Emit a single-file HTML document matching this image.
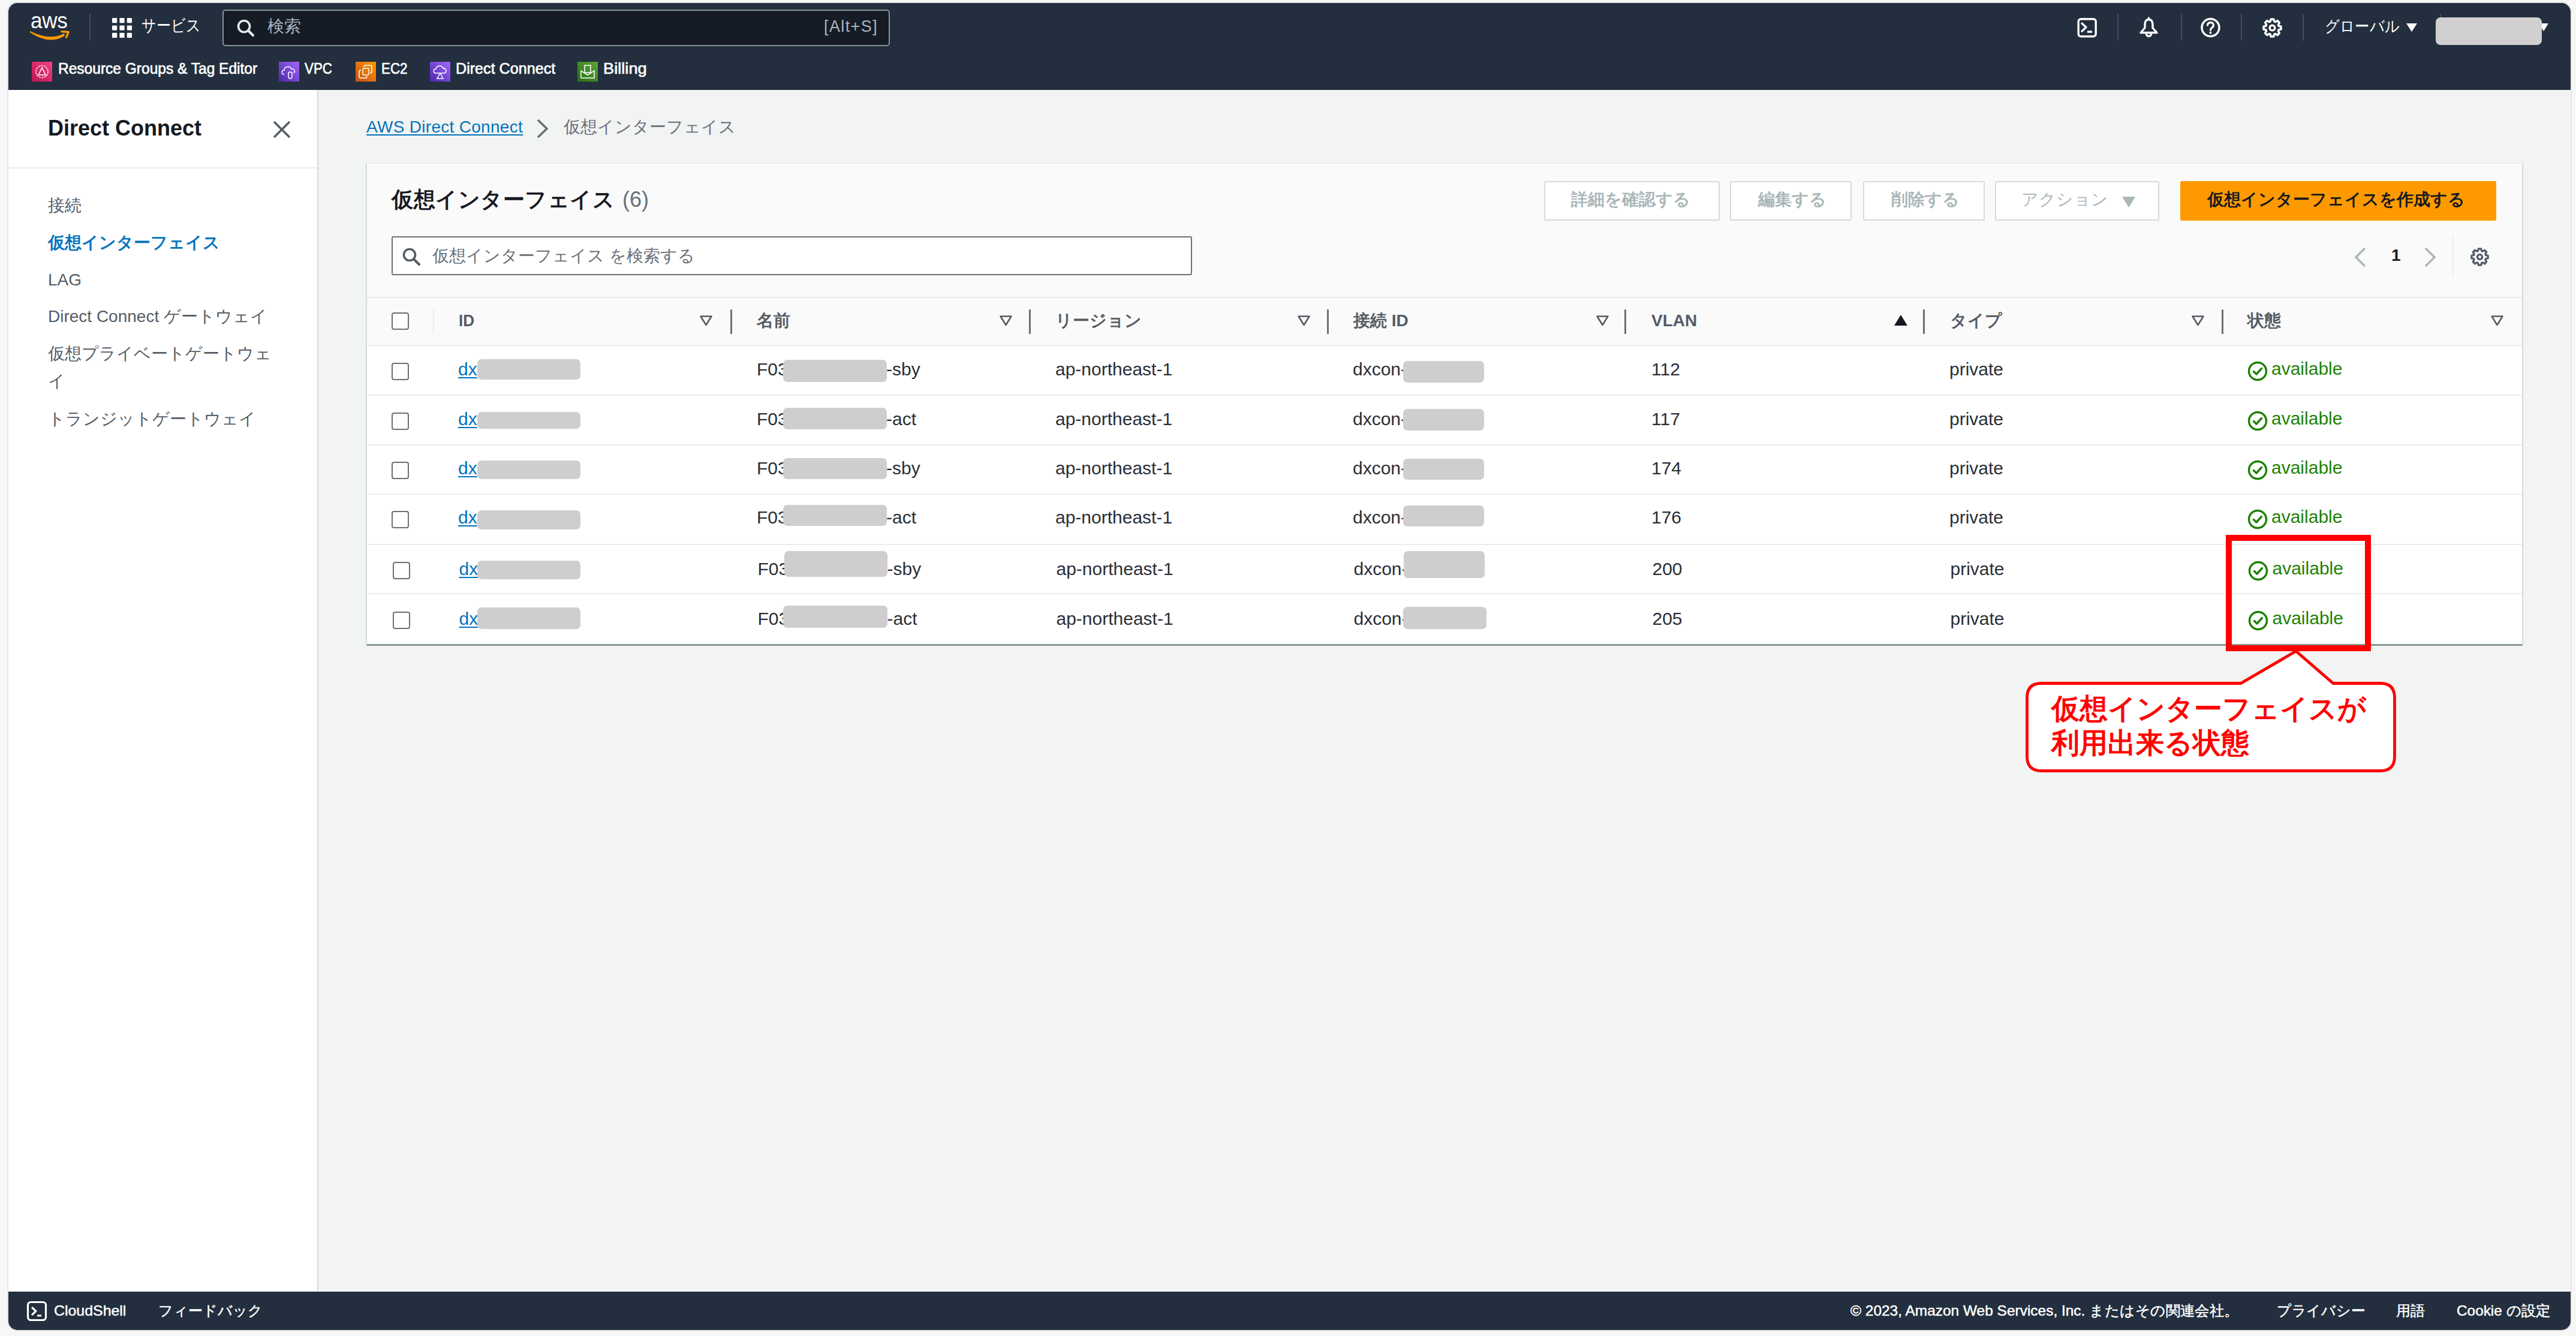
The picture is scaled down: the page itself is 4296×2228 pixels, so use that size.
<!DOCTYPE html>
<html lang="ja">
<head>
<meta charset="utf-8">
<title>仮想インターフェイス | Direct Connect</title>
<style>
html,body{margin:0;padding:0;}
body{width:4296px;height:2228px;overflow:hidden;background:#f7f7f7;position:relative;font-family:"Liberation Sans",sans-serif;color:#16191f;}
.a{position:absolute;white-space:nowrap;}
.sx{transform-origin:0 0;}
#edge{position:absolute;left:12px;top:3px;width:4277px;height:2217px;border-radius:17px;background:#e4e4e4;}
#frame{position:absolute;left:0;top:0;width:4296px;height:2228px;clip-path:inset(5px 9px 10px 14px round 15px);background:#f2f3f3;}
#hdr{position:absolute;left:0;top:0;width:4296px;height:150px;background:#232f3e;}
.hdiv{position:absolute;width:2px;background:#414d5c;}
.wt{color:#fff;}
.fav{position:absolute;top:103px;width:34px;height:33px;}
.favt{position:absolute;top:99px;font-size:25px;color:#fff;line-height:30px;-webkit-text-stroke:0.7px #fff;}
#side{position:absolute;left:0;top:150px;width:529px;height:2005px;background:#fff;border-right:2px solid #d5dbdb;}
.nav{position:absolute;left:80px;font-size:28px;color:#545b64;line-height:34px;}
#ftr{position:absolute;left:0;top:2154px;width:4296px;height:70px;background:#232f3e;}
.ft{position:absolute;top:2169px;font-size:24px;line-height:34px;color:#fff;-webkit-text-stroke:0.5px #fff;}
.sep{position:absolute;background:#eaeded;}
.bc{position:absolute;font-size:28px;line-height:28px;}
#card{position:absolute;left:610px;top:271px;width:3594px;height:801px;background:#fff;border-left:2px solid #d5dbdb;border-right:2px solid #d5dbdb;border-top:2px solid #eaeded;border-bottom:3px solid #879596;border-radius:3px;}
.btn{position:absolute;top:302px;height:62px;border:2px solid #d5dbdb;border-radius:3px;background:#fff;}
.btnt{position:absolute;top:316px;font-size:28px;line-height:34px;font-weight:bold;color:#aab7b8;}
.th{position:absolute;top:518px;font-size:28px;line-height:34px;font-weight:bold;color:#545b64;}
.cdiv{position:absolute;top:516px;width:3px;height:41px;background:#687078;border-radius:1px;}
.cb{position:absolute;width:25px;height:25px;border:2px solid #687078;border-radius:4px;background:#fff;}
.td{position:absolute;font-size:30px;line-height:34px;color:#2a2e35;}
.rd{position:absolute;background:#cfcdce;border-radius:7px;}
.lnk{color:#0073bb;text-decoration:underline;text-decoration-thickness:2px;text-underline-offset:3px;}
.ok{color:#1d8102;}
</style>
</head>
<body>
<div id="edge"></div>
<div id="frame">
<div id="hdr">
<svg class="a" style="left:48px;top:22px" width="72" height="50" viewBox="0 0 72 50">
  <text x="3.2" y="25.3" transform="scale(0.948,1)" font-family="Liberation Sans, sans-serif" font-size="37" fill="#fff" letter-spacing="-0.3">aws</text>
  <path d="M2 31.9 Q35 54 60 37.5 L59 33.8 Q35.5 46.5 2.4 30.1 Z" fill="#f90"/>
  <path d="M54.9 30.6 L66.2 31.4 L62.6 40.4" stroke="#f90" stroke-width="3.3" fill="none" stroke-linecap="round" stroke-linejoin="round"/>
</svg>
<div class="hdiv" style="left:149px;top:23px;height:45px"></div>
<svg class="a" style="left:187px;top:29.5px" width="34" height="34" viewBox="0 0 34 34" fill="#fff"><rect x="0" y="0" width="8.2" height="8.2" rx="1"/><rect x="12.4" y="0" width="8.2" height="8.2" rx="1"/><rect x="24.8" y="0" width="8.2" height="8.2" rx="1"/><rect x="0" y="12.4" width="8.2" height="8.2" rx="1"/><rect x="12.4" y="12.4" width="8.2" height="8.2" rx="1"/><rect x="24.8" y="12.4" width="8.2" height="8.2" rx="1"/><rect x="0" y="24.8" width="8.2" height="8.2" rx="1"/><rect x="12.4" y="24.8" width="8.2" height="8.2" rx="1"/><rect x="24.8" y="24.8" width="8.2" height="8.2" rx="1"/></svg>
<div class="a wt sx" style="left:236px;top:25px;font-size:28px;line-height:36px;transform:scaleX(.86)">サービス</div>
<div class="a" style="left:371px;top:16px;width:1109px;height:57px;border:2px solid #879596;border-radius:5px;background:#151c26"></div>
<svg class="a" style="left:394px;top:31px" width="32" height="32" viewBox="0 0 32 32">
  <circle cx="13" cy="13" r="9.5" stroke="#e9ebed" stroke-width="3.6" fill="none"/>
  <path d="M20 20 L28 28" stroke="#e9ebed" stroke-width="4" stroke-linecap="round"/></svg>
<div class="a" style="left:446px;top:26px;font-size:28px;line-height:36px;color:#aab3bd">検索</div>
<div class="a" style="left:1374px;top:27px;font-size:27px;line-height:34px;color:#aab3bd;letter-spacing:1.4px">[Alt+S]</div>
<svg class="a" style="left:3463px;top:29px" width="36" height="35" viewBox="0 0 36 35" fill="none" stroke="#fff">
  <rect x="3.2" y="2.7" width="29" height="29" rx="4" stroke-width="3.4"/>
  <path d="M9 10 L16 16.5 L9 23" stroke-width="3.4" stroke-linecap="round" stroke-linejoin="round"/>
  <path d="M18 24 L26 24" stroke-width="3.4"/></svg>
<div class="hdiv" style="left:3531px;top:23px;height:45px"></div>
<div class="hdiv" style="left:3637px;top:23px;height:45px"></div>
<div class="hdiv" style="left:3737px;top:23px;height:45px"></div>
<div class="hdiv" style="left:3840px;top:23px;height:45px"></div>
<div class="hdiv" style="left:4069px;top:23px;height:45px"></div>
<svg class="a" style="left:3566px;top:28px" width="36" height="36" viewBox="0 0 36 36" fill="none" stroke="#fff" stroke-width="3.4" stroke-linejoin="round">
  <path d="M17.5 4.5 C13 4.5 11 8.5 11 13 L11 18.5 L4 26.5 L31 26.5 L24 18.5 L24 13 C24 8.5 22 4.5 17.5 4.5 Z"/>
  <path d="M17.5 2 L17.5 4.5" stroke-linecap="round"/>
  <path d="M13.5 27 L13.5 28.5 A4 4 0 0 0 21.5 28.5 L21.5 27"/></svg>
<svg class="a" style="left:3669px;top:29px" width="36" height="36" viewBox="0 0 36 36" fill="none" stroke="#fff" stroke-width="3.4">
  <circle cx="17.5" cy="17" r="14.5"/>
  <path d="M12.5 13 C12.5 7 22.5 7 22.5 13 C22.5 17 17.5 17 17.5 21" stroke-linecap="round"/>
  <circle cx="17.5" cy="25.5" r="1.2" fill="#fff" stroke-width="1.5"/></svg>
<svg class="a" style="left:3772px;top:29px" width="35" height="35" viewBox="0 0 30 30" fill="none" stroke="#fff" stroke-linejoin="round"><path d="M24.18 12.19 L27.44 13.03 L27.44 16.97 L24.18 17.81 L23.48 19.51 L25.19 22.41 L22.41 25.19 L19.51 23.48 L17.81 24.18 L16.97 27.44 L13.03 27.44 L12.19 24.18 L10.49 23.48 L7.59 25.19 L4.81 22.41 L6.52 19.51 L5.82 17.81 L2.56 16.97 L2.56 13.03 L5.82 12.19 L6.52 10.49 L4.81 7.59 L7.59 4.81 L10.49 6.52 L12.19 5.82 L13.03 2.56 L16.97 2.56 L17.81 5.82 L19.51 6.52 L22.41 4.81 L25.19 7.59 L23.48 10.49 Z" stroke-width="3.0"/><circle cx="15" cy="15" r="3.7" stroke-width="3.0"/></svg>
<div class="a wt sx" style="left:3877px;top:27px;font-size:27px;line-height:34px;transform:scaleX(.9)">グローバル</div>
<svg class="a" style="left:4012px;top:38px" width="20" height="16" viewBox="0 0 20 16"><path d="M1 1 L19 1 L10 15 Z" fill="#fff"/></svg>
<svg class="a" style="left:4233px;top:38px" width="18" height="16" viewBox="0 0 18 16"><path d="M1 1 L17 1 L9 14 Z" fill="#fff"/></svg>
<div class="a" style="left:4062px;top:29px;width:177px;height:46px;border-radius:8px;background:#d1cfd0"></div>
<svg class="fav" style="left:53px" viewBox="0 0 34 33"><defs><linearGradient id="gp" x1="0" y1="1" x2="1" y2="0"><stop offset="0" stop-color="#bc1356"/><stop offset="1" stop-color="#f34482"/></linearGradient></defs><rect width="34" height="33" fill="url(#gp)"/><circle cx="17" cy="16.5" r="10" stroke="#fff" stroke-width="1.6" fill="none" stroke-dasharray="3 1.5"/><path d="M11 22 L17 10 L23 22 Z" stroke="#fff" stroke-width="1.5" fill="none"/></svg>
<div class="favt sx" style="left:97px;transform:scaleX(.981)">Resource Groups &amp; Tag Editor</div>
<svg class="fav" style="left:465px" viewBox="0 0 34 33"><defs><linearGradient id="gv" x1="0" y1="1" x2="1" y2="0"><stop offset="0" stop-color="#4d27a8"/><stop offset="1" stop-color="#a166ff"/></linearGradient></defs><rect width="34" height="33" fill="url(#gv)"/><path d="M9 21 C4 21 4 14 9 14 C9 8 18 6 21 12 C26 11 28 16 25 19" stroke="#fff" stroke-width="1.5" fill="none"/><rect x="16" y="17" width="6" height="11" rx="3" stroke="#fff" stroke-width="1.5" fill="none"/></svg>
<div class="favt sx" style="left:508px;transform:scaleX(.895)">VPC</div>
<svg class="fav" style="left:593px" viewBox="0 0 34 33"><defs><linearGradient id="ge" x1="0" y1="1" x2="1" y2="0"><stop offset="0" stop-color="#c8511b"/><stop offset="1" stop-color="#f90"/></linearGradient></defs><rect width="34" height="33" fill="url(#ge)"/><path d="M14 9 Q14 6 17 6 L24 6 Q27 6 27 9 L27 16 Q27 19 24 19" stroke="#fff" stroke-width="1.5" fill="none"/><path d="M19 24 Q19 27 16 27 L9 27 Q6 27 6 24 L6 17 Q6 14 9 14" stroke="#fff" stroke-width="1.5" fill="none"/><rect x="12" y="11" width="10" height="11" rx="2" stroke="#fff" stroke-width="1.5" fill="none"/></svg>
<div class="favt sx" style="left:636px;transform:scaleX(.8925)">EC2</div>
<svg class="fav" style="left:717px" viewBox="0 0 34 33"><rect width="34" height="33" fill="url(#gv)"/><path d="M10 19 C5 19 5 12 10 12 C11 6 20 5 22 11 C27 10 29 17 24 19 Z" stroke="#fff" stroke-width="1.5" fill="none"/><path d="M17 19 L12 28 L22 28 Z" stroke="#fff" stroke-width="1.5" fill="none"/></svg>
<div class="favt sx" style="left:760px;transform:scaleX(1.005)">Direct Connect</div>
<svg class="fav" style="left:963px" viewBox="0 0 34 33"><defs><linearGradient id="gb" x1="0" y1="1" x2="1" y2="0"><stop offset="0" stop-color="#277116"/><stop offset="1" stop-color="#60a337"/></linearGradient></defs><rect width="34" height="33" fill="url(#gb)"/><path d="M6 15 L6 27 L28 27 L28 15 L17 22 Z" stroke="#fff" stroke-width="1.5" fill="none"/><rect x="12" y="6" width="10" height="12" stroke="#fff" stroke-width="1.5" fill="none"/></svg>
<div class="favt sx" style="left:1006px;transform:scaleX(1.09)">Billing</div>
</div>
<div id="side"></div>
<div class="a" style="left:80px;top:196px;font-size:36px;line-height:36px;font-weight:bold;color:#16191f">Direct Connect</div>
<svg class="a" style="left:454px;top:200px" width="32" height="32" viewBox="0 0 32 32"><path d="M3 3 L29 29 M29 3 L3 29" stroke="#545b64" stroke-width="3.6"/></svg>
<div class="sep" style="left:14px;top:279px;width:515px;height:2px"></div>
<div class="nav" style="top:326px;">接続</div>
<div class="nav" style="top:388px;color:#0073bb;font-weight:bold">仮想インターフェイス</div>
<div class="nav" style="top:450px;">LAG</div>
<div class="nav" style="top:511px;">Direct Connect ゲートウェイ</div>
<div class="nav" style="top:573px;">仮想プライベートゲートウェ</div>
<div class="nav" style="top:619px;">イ</div>
<div class="nav" style="top:682px;">トランジットゲートウェイ</div>
<div class="bc lnk" style="left:611px;top:198px;letter-spacing:.3px">AWS Direct Connect</div>
<svg class="a" style="left:893px;top:197px" width="24" height="36" viewBox="0 0 24 36"><path d="M4 3 L19 17.5 L4 32" stroke="#687078" stroke-width="3.6" fill="none"/></svg>
<div class="bc" style="left:940px;top:198px;color:#687078">仮想インターフェイス</div>
<div id="card"></div>
<div class="a" style="left:612px;top:273px;width:3594px;height:303px;background:#fafafa"></div>
<div class="a" style="left:653px;top:313px;font-size:36px;line-height:40px;font-weight:bold;color:#16191f;letter-spacing:.5px">仮想インターフェイス<span style="font-weight:normal;color:#687078;margin-left:13px;letter-spacing:0">(6)</span></div>
<div class="btn" style="left:2575px;width:289px"></div><div class="btnt" style="left:2620px;">詳細を確認する</div>
<div class="btn" style="left:2885px;width:199px"></div><div class="btnt" style="left:2932px;">編集する</div>
<div class="btn" style="left:3107px;width:199px"></div><div class="btnt" style="left:3154px;">削除する</div>
<div class="btn" style="left:3327px;width:270px"></div><div class="btnt" style="left:3371px;font-weight:normal">アクション</div>
<svg class="a" style="left:3538px;top:327px" width="24" height="20" viewBox="0 0 24 20"><path d="M1 1 L23 1 L12 19 Z" fill="#aab7b8"/></svg>
<div class="a" style="left:3636px;top:302px;width:527px;height:66px;background:#ff9900;border-radius:3px"></div>
<div class="btnt" style="left:3681px;color:#16191f">仮想インターフェイスを作成する</div>
<div class="a" style="left:653px;top:394px;width:1331px;height:61px;border:2px solid #687078;border-radius:3px;background:#fff"></div>
<svg class="a" style="left:670px;top:412px" width="32" height="33" viewBox="0 0 32 33"><circle cx="13" cy="13" r="9.5" stroke="#545b64" stroke-width="3.6" fill="none"/><path d="M20 20 L29 29" stroke="#545b64" stroke-width="4" stroke-linecap="round"/></svg>
<div class="a" style="left:721px;top:410px;font-size:28px;line-height:34px;color:#687078">仮想インターフェイス を検索する</div>
<svg class="a" style="left:3924px;top:412px" width="24" height="34" viewBox="0 0 24 34"><path d="M20 2 L5 17 L20 32" stroke="#aab7b8" stroke-width="3.6" fill="none"/></svg>
<div class="a" style="left:3988px;top:408.5px;font-size:28px;line-height:34px;font-weight:bold;color:#16191f">1</div>
<svg class="a" style="left:4041px;top:412px" width="24" height="34" viewBox="0 0 24 34"><path d="M4 2 L19 17 L4 32" stroke="#aab7b8" stroke-width="3.6" fill="none"/></svg>
<div class="a" style="left:4090px;top:395px;width:2px;height:64px;background:#eaeded"></div>
<svg class="a" style="left:4118.5px;top:412px" width="33" height="33" viewBox="0 0 30 30" fill="none" stroke="#545b64" stroke-linejoin="round"><path d="M24.18 12.19 L27.44 13.03 L27.44 16.97 L24.18 17.81 L23.48 19.51 L25.19 22.41 L22.41 25.19 L19.51 23.48 L17.81 24.18 L16.97 27.44 L13.03 27.44 L12.19 24.18 L10.49 23.48 L7.59 25.19 L4.81 22.41 L6.52 19.51 L5.82 17.81 L2.56 16.97 L2.56 13.03 L5.82 12.19 L6.52 10.49 L4.81 7.59 L7.59 4.81 L10.49 6.52 L12.19 5.82 L13.03 2.56 L16.97 2.56 L17.81 5.82 L19.51 6.52 L22.41 4.81 L25.19 7.59 L23.48 10.49 Z" stroke-width="3.0"/><circle cx="15" cy="15" r="3.7" stroke-width="3.0"/></svg>
<div class="sep" style="left:612px;top:495px;width:3594px;height:2px"></div>
<div class="sep" style="left:612px;top:575px;width:3594px;height:2px"></div>
<div class="cb" style="left:653px;top:521px"></div>
<div class="a" style="left:722px;top:516px;width:2px;height:41px;background:#eaeded"></div>
<div class="th sx" style="left:765px;transform:scaleX(.93)">ID</div>
<svg class="a" style="left:1166px;top:525px" width="23" height="20" viewBox="0 0 23 20"><path d="M2.5 2.5 L20.5 2.5 L11.5 17 Z" stroke="#545b64" stroke-width="2.6" fill="none" stroke-linejoin="round"/></svg>
<div class="cdiv" style="left:1218px"></div>
<div class="th sx" style="left:1262px;">名前</div>
<svg class="a" style="left:1666px;top:525px" width="23" height="20" viewBox="0 0 23 20"><path d="M2.5 2.5 L20.5 2.5 L11.5 17 Z" stroke="#545b64" stroke-width="2.6" fill="none" stroke-linejoin="round"/></svg>
<div class="cdiv" style="left:1716px"></div>
<div class="th sx" style="left:1760px;">リージョン</div>
<svg class="a" style="left:2163px;top:525px" width="23" height="20" viewBox="0 0 23 20"><path d="M2.5 2.5 L20.5 2.5 L11.5 17 Z" stroke="#545b64" stroke-width="2.6" fill="none" stroke-linejoin="round"/></svg>
<div class="cdiv" style="left:2213px"></div>
<div class="th sx" style="left:2257px;">接続 ID</div>
<svg class="a" style="left:2661px;top:525px" width="23" height="20" viewBox="0 0 23 20"><path d="M2.5 2.5 L20.5 2.5 L11.5 17 Z" stroke="#545b64" stroke-width="2.6" fill="none" stroke-linejoin="round"/></svg>
<div class="cdiv" style="left:2709px"></div>
<div class="th sx" style="left:2754px;">VLAN</div>
<div class="cdiv" style="left:3207px"></div>
<div class="th sx" style="left:3252px;">タイプ</div>
<svg class="a" style="left:3654px;top:525px" width="23" height="20" viewBox="0 0 23 20"><path d="M2.5 2.5 L20.5 2.5 L11.5 17 Z" stroke="#545b64" stroke-width="2.6" fill="none" stroke-linejoin="round"/></svg>
<div class="cdiv" style="left:3705px"></div>
<div class="th sx" style="left:3748px;">状態</div>
<svg class="a" style="left:4153px;top:525px" width="23" height="20" viewBox="0 0 23 20"><path d="M2.5 2.5 L20.5 2.5 L11.5 17 Z" stroke="#545b64" stroke-width="2.6" fill="none" stroke-linejoin="round"/></svg>
<svg class="a" style="left:3158px;top:524px" width="24" height="20" viewBox="0 0 24 20"><path d="M12 1 L23 19 L1 19 Z" fill="#16191f"/></svg>
<div class="sep" style="left:612px;top:658px;width:3594px;height:2px"></div>
<div class="cb" style="left:653px;top:604.5px"></div>
<div class="td lnk" style="left:764px;top:599.1px">dx</div>
<div class="rd" style="left:795.6px;top:598.8px;width:172.4px;height:34px"></div>
<div class="td" style="left:1262px;top:599.1px">F03</div>
<div class="rd" style="left:1306px;top:600px;width:173px;height:36.5px"></div>
<div class="td" style="left:1478px;top:599.1px">-sby</div>
<div class="td" style="left:1760px;top:599.1px">ap-northeast-1</div>
<div class="td" style="left:2256px;top:599.1px">dxcon-</div>
<div class="rd" style="left:2340px;top:602px;width:135px;height:35.7px"></div>
<div class="td" style="left:2754px;top:599.1px">112</div>
<div class="td" style="left:3251px;top:599.1px">private</div>
<svg class="a" style="left:3747.5px;top:602.0px" width="34" height="34" viewBox="0 0 34 34"><circle cx="17" cy="17" r="14.5" stroke="#1d8102" stroke-width="3.4" fill="none"/><path d="M10.5 17.5 L15 22 L23.5 12.5" stroke="#1d8102" stroke-width="3.4" fill="none" stroke-linecap="round" stroke-linejoin="round"/></svg>
<div class="td ok" style="left:3788px;top:598.1px">available</div>
<div class="sep" style="left:612px;top:740.5px;width:3594px;height:2px"></div>
<div class="cb" style="left:653px;top:687.6px"></div>
<div class="td lnk" style="left:764px;top:682.2px">dx</div>
<div class="rd" style="left:795.5px;top:687.2px;width:172px;height:27.8px"></div>
<div class="td" style="left:1262px;top:682.2px">F03</div>
<div class="rd" style="left:1306px;top:680px;width:173px;height:35.5px"></div>
<div class="td" style="left:1478px;top:682.2px">-act</div>
<div class="td" style="left:1760px;top:682.2px">ap-northeast-1</div>
<div class="td" style="left:2256px;top:682.2px">dxcon-</div>
<div class="rd" style="left:2340px;top:681.8px;width:135px;height:36px"></div>
<div class="td" style="left:2754px;top:682.2px">117</div>
<div class="td" style="left:3251px;top:682.2px">private</div>
<svg class="a" style="left:3747.5px;top:685.1px" width="34" height="34" viewBox="0 0 34 34"><circle cx="17" cy="17" r="14.5" stroke="#1d8102" stroke-width="3.4" fill="none"/><path d="M10.5 17.5 L15 22 L23.5 12.5" stroke="#1d8102" stroke-width="3.4" fill="none" stroke-linecap="round" stroke-linejoin="round"/></svg>
<div class="td ok" style="left:3788px;top:681.2px">available</div>
<div class="sep" style="left:612px;top:823px;width:3594px;height:2px"></div>
<div class="cb" style="left:653px;top:769.8px"></div>
<div class="td lnk" style="left:764px;top:764.4px">dx</div>
<div class="rd" style="left:795.5px;top:768px;width:172px;height:31.4px"></div>
<div class="td" style="left:1262px;top:764.4px">F03</div>
<div class="rd" style="left:1306px;top:763.5px;width:173px;height:35.2px"></div>
<div class="td" style="left:1478px;top:764.4px">-sby</div>
<div class="td" style="left:1760px;top:764.4px">ap-northeast-1</div>
<div class="td" style="left:2256px;top:764.4px">dxcon-</div>
<div class="rd" style="left:2340px;top:765px;width:135px;height:35px"></div>
<div class="td" style="left:2754px;top:764.4px">174</div>
<div class="td" style="left:3251px;top:764.4px">private</div>
<svg class="a" style="left:3747.5px;top:767.3px" width="34" height="34" viewBox="0 0 34 34"><circle cx="17" cy="17" r="14.5" stroke="#1d8102" stroke-width="3.4" fill="none"/><path d="M10.5 17.5 L15 22 L23.5 12.5" stroke="#1d8102" stroke-width="3.4" fill="none" stroke-linecap="round" stroke-linejoin="round"/></svg>
<div class="td ok" style="left:3788px;top:763.4px">available</div>
<div class="sep" style="left:612px;top:906.5px;width:3594px;height:2px"></div>
<div class="cb" style="left:653px;top:851.5px"></div>
<div class="td lnk" style="left:764px;top:846.1px">dx</div>
<div class="rd" style="left:795.5px;top:850.7px;width:172px;height:32px"></div>
<div class="td" style="left:1262px;top:846.1px">F03</div>
<div class="rd" style="left:1306px;top:841.7px;width:173px;height:35.3px"></div>
<div class="td" style="left:1478px;top:846.1px">-act</div>
<div class="td" style="left:1760px;top:846.1px">ap-northeast-1</div>
<div class="td" style="left:2256px;top:846.1px">dxcon-</div>
<div class="rd" style="left:2340px;top:843px;width:135px;height:35.4px"></div>
<div class="td" style="left:2754px;top:846.1px">176</div>
<div class="td" style="left:3251px;top:846.1px">private</div>
<svg class="a" style="left:3747.5px;top:849.0px" width="34" height="34" viewBox="0 0 34 34"><circle cx="17" cy="17" r="14.5" stroke="#1d8102" stroke-width="3.4" fill="none"/><path d="M10.5 17.5 L15 22 L23.5 12.5" stroke="#1d8102" stroke-width="3.4" fill="none" stroke-linecap="round" stroke-linejoin="round"/></svg>
<div class="td ok" style="left:3788px;top:845.1px">available</div>
<div class="sep" style="left:612px;top:989.4px;width:3594px;height:2px"></div>
<div class="cb" style="left:654.5px;top:937px"></div>
<div class="td lnk" style="left:765.5px;top:931.6px">dx</div>
<div class="rd" style="left:795.8px;top:935px;width:172.5px;height:31.3px"></div>
<div class="td" style="left:1263.5px;top:931.6px">F03</div>
<div class="rd" style="left:1307.5px;top:919px;width:172px;height:42.6px"></div>
<div class="td" style="left:1479.5px;top:931.6px">-sby</div>
<div class="td" style="left:1761.5px;top:931.6px">ap-northeast-1</div>
<div class="td" style="left:2257.5px;top:931.6px">dxcon-</div>
<div class="rd" style="left:2341px;top:919px;width:135px;height:45px"></div>
<div class="td" style="left:2755.5px;top:931.6px">200</div>
<div class="td" style="left:3252.5px;top:931.6px">private</div>
<svg class="a" style="left:3749.0px;top:934.5px" width="34" height="34" viewBox="0 0 34 34"><circle cx="17" cy="17" r="14.5" stroke="#1d8102" stroke-width="3.4" fill="none"/><path d="M10.5 17.5 L15 22 L23.5 12.5" stroke="#1d8102" stroke-width="3.4" fill="none" stroke-linecap="round" stroke-linejoin="round"/></svg>
<div class="td ok" style="left:3789.5px;top:930.6px">available</div>
<div class="cb" style="left:654.5px;top:1020px"></div>
<div class="td lnk" style="left:765.5px;top:1014.6px">dx</div>
<div class="rd" style="left:795.8px;top:1012.8px;width:172.5px;height:35.8px"></div>
<div class="td" style="left:1263.5px;top:1014.6px">F03</div>
<div class="rd" style="left:1306px;top:1009.6px;width:174px;height:37.4px"></div>
<div class="td" style="left:1479.5px;top:1014.6px">-act</div>
<div class="td" style="left:1761.5px;top:1014.6px">ap-northeast-1</div>
<div class="td" style="left:2257.5px;top:1014.6px">dxcon-</div>
<div class="rd" style="left:2340px;top:1011.5px;width:139px;height:37.2px"></div>
<div class="td" style="left:2755.5px;top:1014.6px">205</div>
<div class="td" style="left:3252.5px;top:1014.6px">private</div>
<svg class="a" style="left:3749.0px;top:1017.5px" width="34" height="34" viewBox="0 0 34 34"><circle cx="17" cy="17" r="14.5" stroke="#1d8102" stroke-width="3.4" fill="none"/><path d="M10.5 17.5 L15 22 L23.5 12.5" stroke="#1d8102" stroke-width="3.4" fill="none" stroke-linecap="round" stroke-linejoin="round"/></svg>
<div class="td ok" style="left:3789.5px;top:1013.6px">available</div>
<div class="a" style="left:3712px;top:892px;width:222px;height:174px;border:10px solid #ff0000"></div>
<svg class="a" style="left:3370px;top:1078px" width="640" height="220" viewBox="0 0 640 220">
  <path d="M34.5 61.5 L367 61.5 L459 8 L521 61.5 L599.5 61.5 Q623.5 61.5 623.5 85.5 L623.5 183.5 Q623.5 207.5 599.5 207.5 L34.5 207.5 Q10.5 207.5 10.5 183.5 L10.5 85.5 Q10.5 61.5 34.5 61.5 Z" fill="#fff" stroke="#ff0000" stroke-width="4.8"/>
</svg>
<div class="a" style="left:3421px;top:1153px;font-size:47px;line-height:57px;font-weight:bold;color:#ff0000">仮想インターフェイスが</div>
<div class="a" style="left:3421px;top:1210px;font-size:47px;line-height:57px;font-weight:bold;color:#ff0000">利用出来る状態</div>
<div class="a" style="left:530px;top:2151px;width:3760px;height:3px;background:#fff"></div>
<div id="ftr"></div>
<svg class="a" style="left:44px;top:2169px" width="36" height="36" viewBox="0 0 36 36" fill="none" stroke="#fff"><rect x="2.5" y="2.5" width="30" height="30" rx="5" stroke-width="3.2"/><path d="M10 12 L16 17.5 L10 23" stroke-width="3.2" stroke-linecap="round" stroke-linejoin="round"/><path d="M18 25 L25 25" stroke-width="3.2"/></svg>
<div class="ft sx" style="left:90px;transform:scaleX(1.037)">CloudShell</div>
<div class="ft" style="left:264px">フィードバック</div>
<div class="ft sx" style="left:3086px;transform:scaleX(1.019)">© 2023, Amazon Web Services, Inc. またはその関連会社。</div>
<div class="ft sx" style="left:3797px;transform:scaleX(.988)">プライバシー</div>
<div class="ft" style="left:3996px">用語</div>
<div class="ft sx" style="left:4097px;transform:scaleX(1.015)">Cookie の設定</div>
</div>
</body>
</html>
